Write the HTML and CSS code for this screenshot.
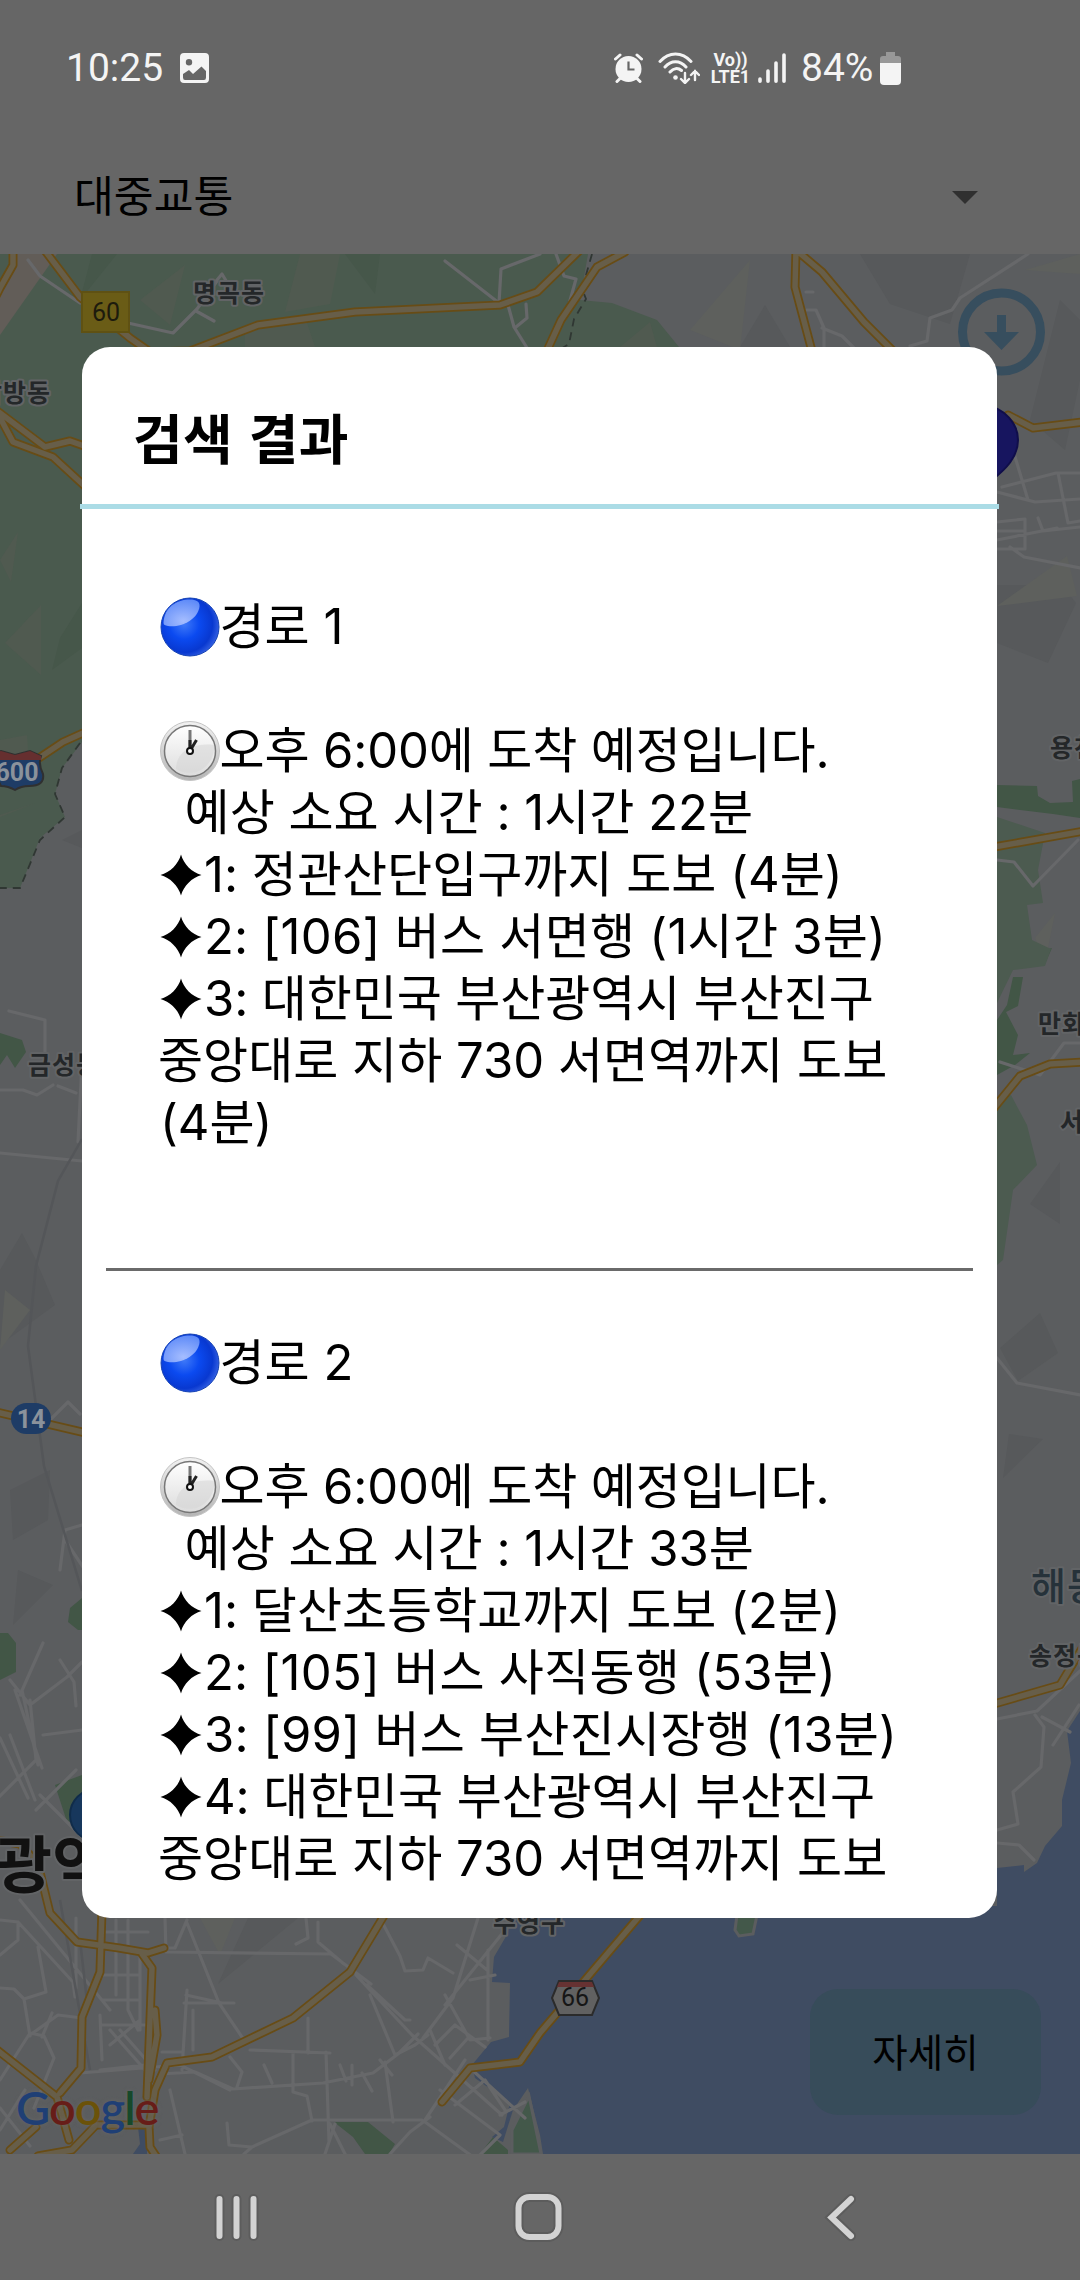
FILE: index.html
```html
<!DOCTYPE html>
<html lang="ko">
<head>
<meta charset="utf-8">
<title>검색 결과</title>
<link rel="stylesheet" href="styles.css">
</head>
<body>
<svg class="defs" width="0" height="0" aria-hidden="true">
  <defs>
    <radialGradient id="ballFill" cx=".4" cy=".45" r=".65">
      <stop offset="0" stop-color="#3f79f8"/><stop offset=".4" stop-color="#0b4af0"/><stop offset=".75" stop-color="#0838d0"/><stop offset="1" stop-color="#416ce8"/>
    </radialGradient>
    <radialGradient id="ballShine" cx=".55" cy=".8" r=".8">
      <stop offset="0" stop-color="#a5bdff"/><stop offset="1" stop-color="#5f8bf8"/>
    </radialGradient>
    <linearGradient id="clockRim" x1="0" y1="0" x2="0" y2="1">
      <stop offset="0" stop-color="#f2f2f2"/><stop offset="1" stop-color="#b4b4b4"/>
    </linearGradient>
    <linearGradient id="clockFace" x1="0" y1="0" x2="0" y2="1">
      <stop offset="0" stop-color="#fff"/><stop offset="1" stop-color="#dcdcdc"/>
    </linearGradient>
    <symbol id="ball" viewBox="0 0 60 60">
      <circle cx="30" cy="30" r="29" fill="url(#ballFill)" stroke="#1542b4" stroke-width="1"/>
      <path d="M3.500 26C4 10 17 2.500 30 2.500c6 0 10 2 9.500 7C38 23 20 31 8 29c-3-.5-4.500-1-4.500-3z" fill="url(#ballShine)"/>
    </symbol>
    <symbol id="clock" viewBox="0 0 62 62">
      <circle cx="31" cy="31" r="29.500" fill="url(#clockRim)" stroke="#c4c4c4"/>
      <circle cx="31" cy="31" r="25.500" fill="url(#clockFace)" stroke="#777" stroke-width="1.500"/>
      <path d="M17 49C17 34 30 22 55 25a25 25 0 0 1-38 24z" fill="#d5d5d5" opacity=".55"/>
      <path d="M31 10v20" stroke="#777" stroke-width="3"/>
      <path d="M31 20v8M37.500 20L31.500 30" stroke="#222" stroke-width="3"/>
      <circle cx="31" cy="31" r="3" fill="#fff" stroke="#111" stroke-width="2"/>
    </symbol>
    <symbol id="star" viewBox="0 0 42 42">
      <path d="M21 .5C23.500 10 32 18.500 41.500 21 32 23.500 23.500 32 21 41.500 18.500 32 10 23.500.5 21 10 18.500 18.500 10 21 .5z"/>
    </symbol>
  </defs>
</svg>
<div class="screen">
  <header class="status">
    <div class="status-left">
      <span class="time">10:25</span>
      <svg class="ic-photo" viewBox="0 0 29 30"><path fill="#f4f4f4" fill-rule="evenodd" d="M4 0h21a4 4 0 0 1 4 4v22a4 4 0 0 1-4 4H4a4 4 0 0 1-4-4V4a4 4 0 0 1 4-4zM9 6a3.200 3.200 0 1 0 0 6.400A3.200 3.200 0 0 0 9 6zM3 21v3.500Q3 27 5 27h19q2 0 2-2.500V18l-4.500-4.500L13 21l-4-4z"/></svg>
    </div>
    <div class="status-right">
      <svg class="ic-alarm" viewBox="0 0 29 30"><g stroke="#f4f4f4" stroke-width="3" stroke-linecap="round"><path d="M1.500 6L6 2M27.500 6L23 2M3 28.500l4-4M26 28.500l-4-4"/></g><circle cx="14.500" cy="16" r="13" fill="#f4f4f4"/><path d="M14.500 8.500V16.500H20.500" fill="none" stroke="#666" stroke-width="2.200"/></svg>
      <svg class="ic-wifi" viewBox="0 0 42 32"><g fill="none" stroke="#f4f4f4" stroke-width="3" stroke-linecap="round"><path d="M2 9.500C11-.5 24-.5 33 9.500M7 15c6-7 15-7 21 0M12 20c3.500-4 8-4.500 11.500-1.500"/><path stroke-width="2.400" d="M27 21v9M23 27l4 4 4-4M37 28v-9M33 23l4-4 4 4"/></g><circle cx="17.500" cy="25.500" r="2.300" fill="#f4f4f4"/></svg>
      <div class="volte"><span>Vo))</span><span>LTE1</span></div>
      <svg class="ic-signal" viewBox="0 0 28 30"><g stroke="#f4f4f4" stroke-width="3.600" stroke-linecap="round"><path d="M2 26v2.200M10 18v10.200M18 10v18.200M26 2v26.200"/></g></svg>
      <span class="percent">84%</span>
      <svg class="ic-battery" viewBox="0 0 21 33"><path fill="#989898" d="M6 0h9v4h3q3 0 3 3v5H0V7q0-3 3-3h3z"/><path fill="#f4f4f4" d="M0 11h21v18q0 4-4 4H4q-4 0-4-4z"/></svg>
    </div>
  </header>
  <div class="spinner"><span>대중교통</span><svg viewBox="0 0 26 13"><path fill="#303030" d="M0 0h26L13 13z"/></svg></div>
  <main class="map-area">
    <svg class="map" viewBox="0 254 1080 1900">
      <rect y="254" width="1080" height="1900" fill="#5b5d5f"/>
      <g class="terrain-dark">
        <path d="M860 254h110l-20 70-60-20zM740 347l25-42 25 42zM997 585l65-0 14 18-28 60-51-20zM1030 420l30-120 20 20v60l-15 70zM0 1270l22-37 13 25 20 47-55 40zM10 1490l40-20-2 50-35 20zM18 1570l35 15-40 40zM1000 1348l40-35 18 40-40 28zM1009 1434l34 5-40 39zM1030 1204l30-42v62zM218 1984l30-66h50zM62 840l20-10v18z"/>
      </g>
      <g class="terrain-light">
        <path d="M200 1918h35l-15 37zM997 606l70-50 10 40zM1035 938l20-25-10 50zM0 1350l30-40-25-20zM1025 270l55-16v20zM690 330l60-70-10 90z"/>
      </g>
      <path fill="#4a5a4e" d="M0 254h588l-8 46 32 3 45 17 22 27v100H82v295l-20 26-7 26 10 23-25 21-20 50H0z"/>
      <path fill="#505a50" d="M300 254h40l-10 50-45 8zM140 300l45-35-15 60zM0 560l18-28-7 50zM5 643l36-38v70zM0 815l35-12-35 14zM0 740l27-5 1 15-28 12zM620 347l30-25 7 25zM245 347v-15l60-15 10 30z"/>
      <path fill="#46574a" d="M80 300l12-46h25zM345 254h35l-5 40zM52 670l8-32 22-35v45z"/>
      <path fill="#625d58" d="M14 254h43L0 335v-50z"/>
      <path fill="#425646" d="M997 785l40 1 1 10 12 7 23-1-1-21 8-2v39l-27-4-56-7zM1013 977h10l-5 29-12 6 12 23-5 20 17-2-15 12-18 10v-55l10-15zM1045 950l7-2-8 18h-10zM0 1033l22 7 4 12-11 16-8-13-7 10zM334 2122h34l27 22-6 10h-24l-12-17zM480 2154l13-17 15 13v4zM82 1598l-12 10-2 14 10 8h4zM55 1785l27-10v25l-14 25zM0 1633h8l8 10v29l-16 8z"/>
      <path fill="#4c5b50" d="M997 817l48 16-7 37 5 33-16 2 5 35 19 9-6 17-32 4-16 33zM997 1100l14-5 16 30 10 40-24 25-10 70-6 5z"/>
      <path fill="#3f4c62" d="M512 1905l-4 28-14 24-2 25 18 1-1 54-18 5-19 23 3 13 35 25-6 24-12 10 11 5 10-32 15-22 12 47 3 19h537V1711l-13 20 4 32-9 37v26l-17 20-8 17-13 9v-7l-27 3v38z"/>
      <path fill="#3f4c62" d="M138 2127h9v27h-14l7-10z"/>
      <path fill="#43584a" stroke="#5b5d5f" stroke-width="3" d="M737 1915h20l-4 19-14 2-4-6zM512 2154v-24l17-34 12 58z"/>
      <g class="minor">
        <path d="M28 260l12 16 40 27M212 286l10-12 6 10M128 323l45 10 24-24 20-28M196 311l18 10M445 261l54 42 2-34 39-15M508 305l6 22 15 24M526 304l1 14-11 9M556 254l8 22 12 3-10 36"/>
        <path d="M1028 254l-68 44-8 12-22 8-3 23-17 5M806 292h7M806 310h10l8 18v20M822 328l20 8 14 14M1002 487l54-14h24M997 492l38 10 45-3M1010 440l18 60M1058 473l10 50 12-2M1038 518l5 13 37-4M997 540l60-12M1010 547l14 10 56 11M997 522l28-3v30h-28M997 531h28"/>
        <path d="M997 860l17 2 19 24 45-46M1000 1062l40 13 24-32h16M9 1011l36 9v33M0 1090h23l14 5 16-10M58 1086l18 7M82 1062l-4 80M0 1153l82 8M997 1358l20 25 63 12M997 1719l40-8 43-40M1035 1715l9 12-3 40-28 25 5 32-28 8M997 1843l22 2 15 15M1042 1717l28 15M1053 1745l26-40M20 1695l23-52M10 1680l20 25 37-28 15-15M15 1690l27 78M22 1690l16 75M60 1660l14 22 2 24M43 1735l39-5M0 1738l28 60M10 1735l25 65M30 1700l6 60-50 50M36 1810l40-40M40 1795l42 42M60 1570l5-40 17-5M65 1540l20 30M50 1420l18-18 12 12"/>
        <path d="M0 1920l18 2v18l-18 15M20 1900l90 110M18 1922l55 60 2 15M76 1918v70M0 1988l14 1 10 10 22-7-8-45M24 1999l6 37M0 2080l30-47 14 3 10 22-20 50M30 2035l28-20 24 3M42 2037l10-24M0 2108l30 38M0 2130l25-40M100 2070l45-5M80 2073l100-8M100 1975h40M102 2000h38M102 2025h50M102 2060l-2-45M103 1932h45M116 1920v75M128 1920v90l10 20M140 1950v80M110 2030l35 40M120 2030l35 40M110 2045l30-25M165 1918l1 34 165 2 40 30M187 1923l32 80 27 40M187 1920l-12 28h-15M306 1918l2 20-12 6M318 1922v20l26 22M184 2003h50M186 1995l36 8M187 1990l-5 80M193 2010v40M182 2052h-20M160 2074l35-2 38 17 90-6 50-10 25-19 20-20M180 2065l50 25M230 2057l12 15-5 15M250 2050l80 3M293 2052v40l14 4 5 25M308 2018v35M326 2052l3 90M264 2065l8 18M340 2065l6 16M352 2065v20M362 2073l10 18M380 2060l12 15M385 2062l8 60M312 2120h110M312 2120l-60 27-23-2-2-22M252 2147l-8 7M170 2090l15 64M160 2140l22-5M380 1918l20 38 5 15 18-1 5-12 25 15M478 1918l-25 80-30 40M505 1930l-60 75M356 1975l56 60 90 80M367 1985l38 35 5 0M370 1995l25 60 20-10 13-10M445 1995l25 45 20-2M488 1950v90M457 1945l30 25M470 1980l25-5M435 2045l20-20 30 22M450 2058l18-20M425 2120l40-60M425 2122l55 40M470 2068l55 50M440 2090l60 45-20 20M455 2105l30-25 20 30M430 2030l15 35M325 2154l10-30M345 2154l-15-30M390 2154l20-22 20-15M500 2115l25-13"/>
      </g>
      <path d="M82 1139l-24 42-22 85-8 80 16 120 38 125M60 1900l30 170M80 1940l8 70" fill="none" stroke="#545659" stroke-width="2.500"/>
      <path d="M80 743l-18 25-7 26 10 23-25 23-20 48H0M592 254l-10 35 4 10-12 20-5 25-10 6" fill="none" stroke="#303733" stroke-width="1.800" stroke-dasharray="8 6"/>
      <g class="road-edge">
        <path id="r1" d="M-6 300l6-12 13-23V250M43 248l37 49 50 41 20 14 40-1 68-26 97-13 145-7 37-13 43-42M545 355l16-35 36-53 28-15M796 250l-1 37 18 68M796 250l26 22 42 50 36 36M-4 410l17 32 40 15 36 33M-4 410l49 37 25-6 17 6M30 764l33-22 20-9"/>
        <path id="r2" d="M-4 1412l90 21M-4 1840l24 4 18 20 12 49 27 29 42 6 29 5 16-5M102 1910l-2 62-18 45-1 51-21 25M142 1954l10 14-5 129M155 2010l2 25-8 45M-4 2049l61 48 12 43M385 1914l-35 58-57 46-81 39-45 6-12 27-6 37 1 20 8 12M38 2156l34-6 24-25h50M10 2150l26-23M442 2102l28-34 50-6 20-29 102-120"/>
        <path id="r3" d="M1008 415l25 13 50-6M994 847l90-16M994 1108l26-32 30-12 34-2M994 1704l66-19 24-40"/>
      </g>
      <g class="road"><use href="#r1"/><use href="#r2"/><use href="#r3"/></g>
      <path d="M985 405c20 3 33 19 33 35 0 17-12 29-26 40z" fill="#17155f" stroke="#100e4a" stroke-width="2"/>
      <circle cx="96" cy="1815" r="26" fill="#17375c" stroke="#102c4a" stroke-width="2"/>
      <g class="sign">
        <rect x="82" y="292" width="47" height="40" fill="#6a5c16" stroke="#5f5113" stroke-width="2"/>
        <text x="106" y="321" fill="#1d1b0d">60</text>
        <path d="M-14 755l15-4 14 4 15-4 11 5q-3 8 2 18 2 12-14 12-8 0-14 4-7-4-14-4z" fill="#1e3c66" stroke="#303030" stroke-width="2"/>
        <path d="M-14 755l15-4 14 4 15-4 11 5v4h-55z" fill="#662f2f"/>
        <text x="17" y="781" fill="#8b929b" font-weight="bold">600</text>
        <rect x="11" y="1403" width="40" height="31" rx="15.500" fill="#1e3c66"/>
        <text x="31" y="1428" fill="#8b929b" font-weight="bold">14</text>
        <path d="M559 1981h33l7 17-7 17h-33l-7-17z" fill="#616161" stroke="#2b2b2b" stroke-width="2"/>
        <path d="M559 1982h33l2 5h-37z" fill="#663232"/>
        <text x="575" y="2006" fill="#161616">66</text>
      </g>
      <g class="place">
        <text x="193" y="302">명곡동</text><text x="-21" y="402">삼방동</text><text x="28" y="1074">금성동</text>
        <text x="1050" y="757">용천리</text><text x="1038" y="1033">만화리</text><text x="1060" y="1131">서부리</text>
        <text x="1029" y="1665">송정동</text><text x="493" y="1932">수영구</text>
        <text class="sight" x="1031" y="1600">해동용궁사</text>
        <text class="city" x="-119" y="1888">부산광역시</text>
      </g>
      <circle cx="1001.500" cy="332" r="39" fill="none" stroke="#374e5e" stroke-width="9"/>
      <path d="M997 315h9v17h13l-17.500 18L984 332h13z" fill="#374e5e"/>
    </svg>
    <div class="google"><span class="b">G</span><span class="r">o</span><span class="y">o</span><span class="b">g</span><span class="g">l</span><span class="r">e</span></div>
    <button class="detail">자세히</button>
  </main>
  <nav class="nav">
    <svg viewBox="0 0 1080 126"><g fill="none" stroke-linecap="round" stroke-linejoin="miter"><g stroke="#5c5c5c" stroke-width="10"><path d="M219.500 45v37M236.500 45v37M253.500 45v37M851 45l-19.500 18.500L851 82"/><rect x="518.500" y="43" width="40" height="40" rx="11"/></g><g stroke="#d3d3d3" stroke-width="6"><path d="M219.500 45v37M236.500 45v37M253.500 45v37M851 45l-19.500 18.500L851 82"/><rect x="518.500" y="43" width="40" height="40" rx="11"/></g></g></svg>
  </nav>
  <section class="dialog">
    <h1>검색 결과</h1>
    <div class="rule"></div>
    <article class="route">
      <p><svg class="ball"><use href="#ball"/></svg>경로 1</p>
      <p> </p>
      <p class="arrival"><svg class="clock"><use href="#clock"/></svg>오후 6:00에 도착 예정입니다.</p>
      <p class="duration">  예상 소요 시간 : 1시간 22분</p>
      <p><svg class="star"><use href="#star"/></svg>1: 정관산단입구까지 도보 (4분)</p>
      <p class="bus"><svg class="star"><use href="#star"/></svg>2: [106] 버스 서면행 (1시간 3분)</p>
      <p class="address"><svg class="star"><use href="#star"/></svg>3: 대한민국 부산광역시 부산진구</p>
      <p class="wrapped">중앙대로 지하 730 서면역까지 도보</p>
      <p>(4분)</p>
    </article>
    <hr>
    <article class="route second">
      <p><svg class="ball"><use href="#ball"/></svg>경로 2</p>
      <p> </p>
      <p class="arrival"><svg class="clock"><use href="#clock"/></svg>오후 6:00에 도착 예정입니다.</p>
      <p class="duration">  예상 소요 시간 : 1시간 33분</p>
      <p><svg class="star"><use href="#star"/></svg>1: 달산초등학교까지 도보 (2분)</p>
      <p class="bus"><svg class="star"><use href="#star"/></svg>2: [105] 버스 사직동행 (53분)</p>
      <p class="bus"><svg class="star"><use href="#star"/></svg>3: [99] 버스 부산진시장행 (13분)</p>
      <p class="address"><svg class="star"><use href="#star"/></svg>4: 대한민국 부산광역시 부산진구</p>
      <p class="wrapped">중앙대로 지하 730 서면역까지 도보</p>
    </article>
  </section>
</div>
</body>
</html>
```

FILE: styles.css
```css
* { box-sizing: border-box; margin: 0; padding: 0; }
body { background: #666; font-family: Roboto, "Noto Sans CJK KR", sans-serif; }
svg { display: block; }
.defs { position: absolute; }
.screen { position: relative; width: 1080px; height: 2280px; overflow: hidden; background: #666; display: flex; flex-direction: column; }

.status { height: 136px; display: flex; justify-content: space-between; padding: 0 179px 0 66px; color: #f4f4f4; font-size: 39px; line-height: 136px; }
.status-left, .status-right { display: flex; align-items: center; }
.ic-photo { width: 29px; height: 30px; margin-left: 17px; }
.ic-alarm { width: 29px; height: 30px; margin-right: 15px; }
.ic-wifi { width: 42px; height: 32px; margin-right: 11px; }
.volte { width: 39px; display: flex; flex-direction: column; align-items: center; font-size: 18px; font-weight: 700; line-height: 16.5px; padding-top: 1px; margin-right: 8px; }
.ic-signal { width: 28px; height: 30px; margin-right: 15px; }
.percent { width: 72px; white-space: nowrap; margin-right: 7px; }
.ic-battery { width: 21px; height: 33px; }

.spinner { height: 118px; display: flex; align-items: center; justify-content: space-between; padding: 5px 102px 0 74px; font-size: 43.3px; line-height: 113px; color: #000; }
.spinner svg { width: 26px; height: 13px; }

.map-area { position: relative; height: 1900px; }
.map { width: 1080px; height: 1900px; }
.terrain-dark { fill: #57595b; }
.terrain-light { fill: #5e605d; }
.minor { fill: none; stroke: #67686a; stroke-width: 3.2; stroke-linejoin: round; stroke-linecap: round; }
.road-edge, .road { fill: none; stroke-linejoin: round; stroke-linecap: round; }
.road-edge { stroke: #684c15; stroke-width: 9; }
.road { stroke: #675e49; stroke-width: 5.5; }
.sign { font: 25px Roboto, sans-serif; text-anchor: middle; }
.place { font: 700 25px "Noto Sans CJK KR", sans-serif; fill: #242729; stroke: #626466; stroke-width: 4px; stroke-linejoin: round; paint-order: stroke; letter-spacing: 1px; }
.place .sight { font-size: 38px; font-weight: 500; fill: #26323a; }
.place .city { font-size: 62px; font-weight: 700; fill: #111; letter-spacing: 0; }
.google { position: absolute; left: 16px; top: 1825px; font: 600 47px/56px Lato, sans-serif; letter-spacing: -1px; text-shadow: 0 0 4px #666; }
.google .b { color: #1f3f75; } .google .r { color: #671d18; } .google .y { color: #6b5209; } .google .g { color: #16492a; }
.detail { position: absolute; left: 810px; top: 1735px; width: 231px; height: 126px; padding-bottom: 4px; border: 0; border-radius: 28px; background: #374c5a; color: #000; font: 38.500px "Noto Sans CJK KR", sans-serif; }

.nav { height: 126px; }

.dialog { position: absolute; left: 82px; top: 347px; width: 915px; height: 1571px; border-radius: 28px; background: #fff; color: #000; }
.dialog h1 { height: 157px; padding: 50px 0 0 51px; font: 700 54px/80px "Noto Sans CJK KR", sans-serif; letter-spacing: .4px; }
.rule { height: 5px; margin: 0 -2px; background: #abdce6; }
.route { padding: 87px 0 0 78px; font: 49px/62px Inter, "Noto Sans CJK KR", sans-serif; }
.route p { height: 62px; display: flex; align-items: center; white-space: pre; }
.route svg { flex: none; }
.ball { width: 60px; height: 60px; margin: 0 0 0 -.5px; }
.clock { width: 62px; height: 62px; margin: 0 -1px 0 -1.500px; }
.star { width: 42px; height: 42px; margin-right: 2px; }
.route .arrival { letter-spacing: -.15px; }
.route .duration { margin-left: -3px; }
.route .bus { letter-spacing: .24px; }
.route .address { letter-spacing: -.12px; }
.route .wrapped { margin-left: -2px; }
hr { height: 3px; margin: 114px 24px 0; border: 0; background: #6a6a6a; }
.second { padding-top: 61px; }
```
